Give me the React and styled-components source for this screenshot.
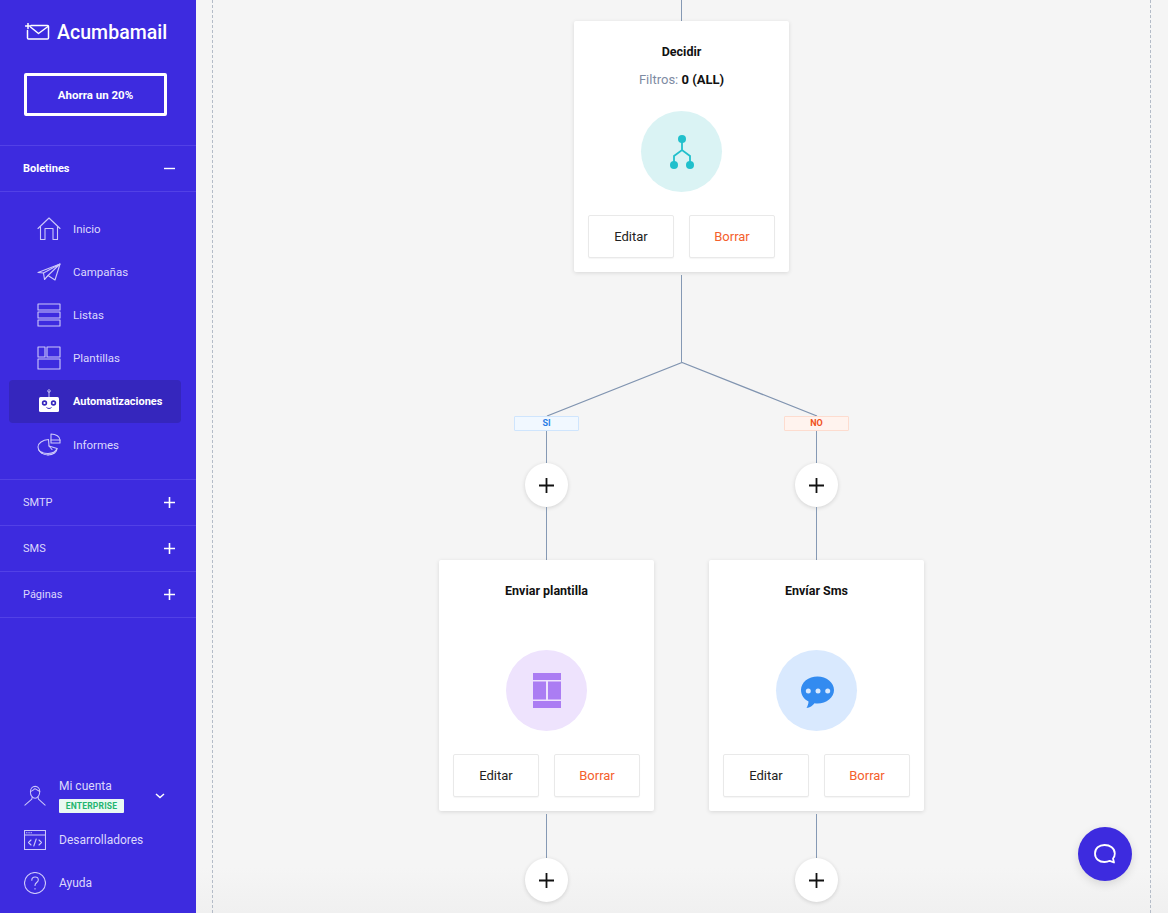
import React from 'react';
import styled, { createGlobalStyle } from 'styled-components';

const GlobalStyle = createGlobalStyle`
  html, body {
    margin: 0;
    padding: 0;
    height: 100%;
    overflow: hidden;
  }
  body {
    font-family: Roboto, 'Liberation Sans', sans-serif;
    -webkit-font-smoothing: antialiased;
  }
  * { box-sizing: border-box; }
`;

const Page = styled.div`
  display: flex;
  height: 913px;
  overflow: hidden;
  background: linear-gradient(180deg, #f5f5f5 0%, #f5f5f5 95%, #f0f0f0 100%);
`;

/* sidebar */
const Sidebar = styled.aside`
  width: 196px;
  flex: none;
  height: 100%;
  display: flex;
  flex-direction: column;
  background: #3d2bdf;
  color: #dcd8fc;
`;

const Brand = styled.div`
  display: flex;
  align-items: center;
  gap: 7px;
  height: 24px;
  margin: 20px 0 0 25px;
  color: #fff;
  font-size: 19.5px;
  font-weight: 500;
  letter-spacing: 0.05px;
`;

const PromoButton = styled.button`
  display: block;
  width: 143px;
  height: 43px;
  margin: 29px 0 29px 24px;
  background: transparent;
  border: 3px solid #fff;
  border-radius: 2px;
  color: #fff;
  font: 700 11.5px Roboto, sans-serif;
`;

const SectionRow = styled.div`
  display: flex;
  align-items: center;
  justify-content: space-between;
  height: ${p => (p.$last ? 47 : 46)}px;
  padding: 0 21px 0 23px;
  border-top: 1px solid #5241e6;
  border-bottom: ${p => (p.$last ? '1px solid #5241e6' : 'none')};
  color: ${p => (p.$open ? '#fff' : '#dcd8fc')};
  font-size: 11px;
  font-weight: ${p => (p.$open ? 700 : 400)};
`;

const NavList = styled.nav`
  display: flex;
  flex-direction: column;
  padding: 15px 15px 12.8px 9px;
  border-top: 1px solid #5241e6;
`;

const NavItem = styled.a`
  display: flex;
  align-items: center;
  height: 43.2px;
  padding-left: 28px;
  gap: 12px;
  border-radius: 4px;
  font-size: ${p => (p.$active ? 11 : 11.5)}px;
  font-weight: ${p => (p.$active ? 700 : 400)};
  color: ${p => (p.$active ? '#fff' : '#dcd8fc')};
  background: ${p => (p.$active ? '#3526bd' : 'transparent')};
`;

const FooterNav = styled.div`
  margin-top: auto;
  padding: 0 0 9px 24px;
  display: flex;
  flex-direction: column;
`;

const AccountRow = styled.div`
  display: flex;
  align-items: center;
  height: 45px;
  padding-right: 31px;
  gap: 13px;
`;

const AccountText = styled.div`
  flex: 1;
  display: flex;
  flex-direction: column;
  align-items: flex-start;
  gap: 5px;
  font-size: 12px;
  line-height: 16px;
`;

const PlanBadge = styled.span`
  display: block;
  width: 65px;
  height: 14px;
  background: #eaf9f2;
  border-radius: 1px;
  color: #1fb56f;
  font-size: 8.5px;
  font-weight: 700;
  line-height: 14px;
  text-align: center;
  letter-spacing: 0.2px;
`;

const FooterItem = styled.a`
  display: flex;
  align-items: center;
  height: 43px;
  gap: 13px;
  font-size: 12px;
  color: #dcd8fc;
`;

/* canvas */
const Main = styled.main`
  flex: 1;
  position: relative;
  padding: 0 17px 0 16px;
  height: 100%;
`;

const Canvas = styled.div`
  height: 100%;
  border-left: 1px dashed #b4bcc8;
  border-right: 1px dashed #b4bcc8;
  display: flex;
  flex-direction: column;
  align-items: center;
  overflow: hidden;
`;

const Line = styled.div`
  flex: none;
  width: 1.5px;
  height: ${p => p.$h}px;
  margin-top: ${p => p.$gap || 0}px;
  background: #8599b4;
`;

const Fork = styled.svg`
  display: block;
  flex: none;
`;

const Branches = styled.div`
  display: grid;
  grid-template-columns: 215px 215px;
  column-gap: 55px;
`;

const Branch = styled.div`
  display: flex;
  flex-direction: column;
  align-items: center;
`;

const Tag = styled.div`
  flex: none;
  width: 65px;
  height: 15px;
  border: 1px solid ${p => (p.$tone === 'no' ? '#fddccf' : '#cfe5fd')};
  background: ${p => (p.$tone === 'no' ? '#fff3ee' : '#f1f8ff')};
  color: ${p => (p.$tone === 'no' ? '#f0521a' : '#2a7ee6')};
  border-radius: 1px;
  font-size: 9px;
  font-weight: 700;
  line-height: 13px;
  text-align: center;
`;

const AddButton = styled.div`
  flex: none;
  width: 43px;
  height: 44px;
  border-radius: 50%;
  background: #fff;
  box-shadow: 0 1px 4px rgba(0, 0, 0, 0.14);
  display: flex;
  align-items: center;
  justify-content: center;
`;

const Card = styled.div`
  flex: none;
  width: 215px;
  height: 251px;
  padding: 21px 14px 14px;
  background: #fff;
  border-radius: 2px;
  box-shadow: 0 1px 4px rgba(0, 0, 0, 0.12);
  display: flex;
  flex-direction: column;
  align-items: center;
`;

const CardTitle = styled.div`
  height: 20px;
  color: #111;
  font-size: 12.5px;
  font-weight: 700;
  line-height: 20px;
`;

const CardFilter = styled.div`
  height: 20px;
  margin-top: 8px;
  color: #7e8ba3;
  font-size: 13px;
  line-height: 20px;
  b {
    color: #111;
    font-weight: 700;
  }
`;

const IconCircle = styled.div`
  flex: none;
  width: 81px;
  height: 81px;
  margin-top: 21px;
  border-radius: 50%;
  background: ${p => p.$bg};
  display: flex;
  align-items: center;
  justify-content: center;
`;

const CardActions = styled.div`
  width: 100%;
  margin-top: 23px;
  display: grid;
  grid-template-columns: 86px 86px;
  justify-content: space-between;
`;

const ActionButton = styled.button`
  height: 43px;
  padding: 0 0 1px;
  background: #fff;
  border: 1px solid #e9e9e9;
  border-radius: 2px;
  box-shadow: 0 1px 1px rgba(0, 0, 0, 0.04);
  color: ${p => (p.$danger ? '#f4602c' : '#222')};
  font: 400 13px Roboto, sans-serif;
`;

const ChatBubble = styled.div`
  position: absolute;
  left: 882px;
  top: 827px;
  width: 54px;
  height: 54px;
  border-radius: 50%;
  background: #3d2bdf;
  box-shadow: 0 3px 10px rgba(0, 0, 0, 0.12);
  display: flex;
  align-items: center;
  justify-content: center;
`;

/* icons */
const Stroke = ({ w = 24, h = 24, vb = '0 0 24 24', sw = 1.1, color = '#cdc8fa', children }) => (
  <svg width={w} height={h} viewBox={vb} fill="none" stroke={color} strokeWidth={sw} strokeLinejoin="round" strokeLinecap="round" style={{ flex: 'none' }}>
    {children}
  </svg>
);

const LogoIcon = () => (
  <Stroke w={25} h={18} vb="0 0 25 18" sw={1.5} color="#fff">
    <path d="M6 2.500h16.500a1 1 0 0 1 1 1v11.500a1 1 0 0 1-1 1H3.500a1 1 0 0 1-1-1V7.500" />
    <path d="M5.500 4l8 6.500 9.500-7" />
    <path d="M3 0.500v5M0.500 3h5" />
  </Stroke>
);

const HomeIcon = () => (
  <Stroke>
    <path d="M1 11.500L12 1l11 10.500" />
    <path d="M3.500 9.500V22.500H8V11.500H16V22.500H20.500V9.500" />
  </Stroke>
);

const PlaneIcon = () => (
  <Stroke>
    <path d="M1 12.500L23 4l-5 16-7-4.500-3.500 4-1-6.500z" />
    <path d="M6.500 13L23 4 11 15.500M7.500 19.500l3.500-4" />
  </Stroke>
);

const ListIcon = () => (
  <Stroke>
    <rect x="1" y="1" width="22" height="6" />
    <rect x="1" y="9" width="22" height="6" />
    <rect x="1" y="17" width="22" height="6" />
  </Stroke>
);

const TemplateIcon = () => (
  <Stroke>
    <rect x="1" y="1" width="7" height="10" />
    <rect x="10" y="1" width="13" height="10" />
    <rect x="1" y="13" width="22" height="10" />
  </Stroke>
);

const RobotIcon = () => (
  <svg width="24" height="24" viewBox="0 0 24 24" style={{ flex: 'none' }}>
    <path d="M12 2v6" stroke="#cdc8fa" strokeWidth="1" />
    <circle cx="12" cy="2" r="1.300" fill="none" stroke="#cdc8fa" strokeWidth="0.800" />
    <rect x="2" y="8" width="20" height="15" rx="1.500" fill="#fff" />
    <circle cx="7.500" cy="14" r="2.700" fill="#3526bd" />
    <circle cx="7.500" cy="14" r="1.100" fill="#fff" />
    <circle cx="16.500" cy="14" r="2.700" fill="#3526bd" />
    <circle cx="16.500" cy="14" r="1.100" fill="#fff" />
    <path d="M9.500 18.500c1.500 1.300 3.500 1.300 5 0" stroke="#3526bd" strokeWidth="1" fill="none" />
  </svg>
);

const PieIcon = () => (
  <Stroke>
    <path d="M14 1c5 0 9 2.500 9 6v3H14z" />
    <path d="M14 7h9" />
    <path d="M11.500 6.500C5.500 7 1 10 1 14c0 4.500 4.500 8 10 8s9-3 9-6.500L12 13z" />
    <path d="M1.500 16.500C3 19.500 6.500 20.500 11 20.500c4.500 0 8-2 9-5" />
    <path d="M12 13l3 3.500M11 20.500v1.500M5 19v1.500" />
  </Stroke>
);

const UserIcon = () => (
  <Stroke w={22} h={22}>
    <path d="M7 7.500c0-3.500 2.300-6 5.200-6s5 2.300 5 5.500-2 7.500-5.100 7.500S7 11 7 7.500z" />
    <path d="M7 7c2-.3 3.500-2 5-3 1.500.8 3.500 2.500 5.200 3" />
    <path d="M9 13l-.5 2.500L1 22M15.300 13l.5 2.500L23 22" />
  </Stroke>
);

const DevIcon = () => (
  <Stroke w={22} h={20} vb="0 0 22 20">
    <rect x="0.500" y="0.500" width="21" height="19" />
    <path d="M0.500 5h21" />
    <path d="M2.500 2.800h.5M4.800 2.800h.5M7 2.800h.5" />
    <path d="M7 10l-2.500 2.500L7 15M15 10l2.500 2.500L15 15M12.200 9l-2.400 7" />
  </Stroke>
);

const HelpIcon = () => (
  <Stroke w={22} h={22} vb="0 0 22 22">
    <circle cx="11" cy="11" r="10.500" />
    <path d="M7.800 8.200c0-2 1.500-3.200 3.300-3.200 1.900 0 3.200 1.300 3.200 2.900 0 2.600-3.300 2.700-3.300 5.500" />
    <path d="M11 16.500v.5" />
  </Stroke>
);

const PlusIcon = ({ size = 15, sw = 1.8, color = '#111' }) => (
  <svg width={size} height={size} viewBox={`0 0 ${size} ${size}`} stroke={color} strokeWidth={sw} style={{ flex: 'none' }}>
    <path d={`M${size / 2} 0v${size}M0 ${size / 2}h${size}`} />
  </svg>
);

const MinusIcon = () => (
  <svg width="11" height="11" viewBox="0 0 11 11" stroke="#fff" strokeWidth="1.400">
    <path d="M0 5.500h11" />
  </svg>
);

const ChevronIcon = () => (
  <svg width="10" height="6" viewBox="0 0 10 6" fill="none" stroke="#fff" strokeWidth="1.500" style={{ flex: 'none' }}>
    <path d="M1 1l4 3.500L9 1" />
  </svg>
);

const SplitIcon = () => (
  <svg width="24" height="34" viewBox="0 0 24 34" fill="none" stroke="#21c0cc" strokeWidth="1.800">
    <circle cx="12" cy="4" r="4" fill="#21c0cc" stroke="none" />
    <circle cx="4" cy="30" r="4" fill="#21c0cc" stroke="none" />
    <circle cx="20" cy="30" r="4" fill="#21c0cc" stroke="none" />
    <path d="M12 6v9M4 28v-7l8-6 8 6v7" />
  </svg>
);

const LayoutIcon = () => (
  <svg width="28" height="35" viewBox="0 0 28 35" fill="#ab7df3">
    <rect x="0" y="0" width="28" height="7" />
    <rect x="0" y="8.500" width="13" height="18" />
    <rect x="15" y="8.500" width="13" height="18" />
    <rect x="0" y="28" width="28" height="7" />
  </svg>
);

const SmsIcon = () => (
  <svg width="35" height="37" viewBox="-2 -4 35 37" fill="#338bf0">
    <path d="M16.500 0.500C7.500 0.500 0 6.300 0 14c0 5 3 9.200 7.500 11.600 0 2.300-.8 4.400-2 6.400 3.500-.3 6-2.300 8-4.800 1 .2 2 .3 3 .3 9 0 16.500-6 16.500-13.500S25.500 .5 16.500 .5z" />
    <circle cx="7.300" cy="15" r="2.500" fill="#d9e9fe" />
    <circle cx="17" cy="15" r="2.500" fill="#d9e9fe" />
    <circle cx="26.700" cy="15" r="2.500" fill="#d9e9fe" />
  </svg>
);

const BubbleIcon = () => (
  <svg width="22" height="21" viewBox="0 0 22 21" fill="none" stroke="#fff" strokeWidth="1.800" strokeLinejoin="round">
    <path d="M10.500 1C5 1 1 4.300 1 9.500S5 18 10.500 18c2 0 3.800-.4 5.200-1.200l4.300 1.700-1-4c1.300-1.400 1.800-3.200 1.800-5C20.800 4.300 16 1 10.500 1z" />
  </svg>
);

const navItems = [
  { label: 'Inicio', icon: <HomeIcon /> },
  { label: 'Campañas', icon: <PlaneIcon /> },
  { label: 'Listas', icon: <ListIcon /> },
  { label: 'Plantillas', icon: <TemplateIcon /> },
  { label: 'Automatizaciones', icon: <RobotIcon />, active: true },
  { label: 'Informes', icon: <PieIcon /> },
];

const StepCard = ({ title, filter, bg, icon }) => (
  <Card>
    <CardTitle>{title}</CardTitle>
    <CardFilter>{filter && <>Filtros: <b>{filter}</b></>}</CardFilter>
    <IconCircle $bg={bg}>{icon}</IconCircle>
    <CardActions>
      <ActionButton>Editar</ActionButton>
      <ActionButton $danger>Borrar</ActionButton>
    </CardActions>
  </Card>
);

const BranchColumn = ({ tone, label, title, bg, icon }) => (
  <Branch>
    <Tag $tone={tone}>{label}</Tag>
    <Line $h={32} />
    <AddButton><PlusIcon /></AddButton>
    <Line $h={53} />
    <StepCard title={title} bg={bg} icon={icon} />
    <Line $h={44} $gap={3} />
    <AddButton><PlusIcon /></AddButton>
  </Branch>
);

export default function App() {
  return (
    <Page>
      <GlobalStyle />
      <Sidebar>
        <Brand><LogoIcon />Acumbamail</Brand>
        <PromoButton>Ahorra un 20%</PromoButton>
        <SectionRow $open>Boletines<MinusIcon /></SectionRow>
        <NavList>
          {navItems.map(item => (
            <NavItem key={item.label} $active={item.active}>{item.icon}{item.label}</NavItem>
          ))}
        </NavList>
        <SectionRow>SMTP<PlusIcon size={11} sw={1.6} color="#fff" /></SectionRow>
        <SectionRow>SMS<PlusIcon size={11} sw={1.6} color="#fff" /></SectionRow>
        <SectionRow $last>Páginas<PlusIcon size={11} sw={1.6} color="#fff" /></SectionRow>
        <FooterNav>
          <AccountRow>
            <UserIcon />
            <AccountText>
              Mi cuenta
              <PlanBadge>ENTERPRISE</PlanBadge>
            </AccountText>
            <ChevronIcon />
          </AccountRow>
          <FooterItem><DevIcon />Desarrolladores</FooterItem>
          <FooterItem><HelpIcon />Ayuda</FooterItem>
        </FooterNav>
      </Sidebar>
      <Main>
        <Canvas>
          <Line $h={21} />
          <StepCard title="Decidir" filter="0 (ALL)" bg="#daf3f4" icon={<SplitIcon />} />
          <Line $h={87} $gap={3} />
          <Fork width="272" height="54" viewBox="0 0 272 54" fill="none" stroke="#8094b0" strokeWidth="1.200">
            <path d="M1 54L136 0.500 271 54" />
          </Fork>
          <Branches>
            <BranchColumn tone="si" label="SI" title="Enviar plantilla" bg="#eee3fd" icon={<LayoutIcon />} />
            <BranchColumn tone="no" label="NO" title="Envíar Sms" bg="#d9e9fe" icon={<SmsIcon />} />
          </Branches>
        </Canvas>
        <ChatBubble><BubbleIcon /></ChatBubble>
      </Main>
    </Page>
  );
}
